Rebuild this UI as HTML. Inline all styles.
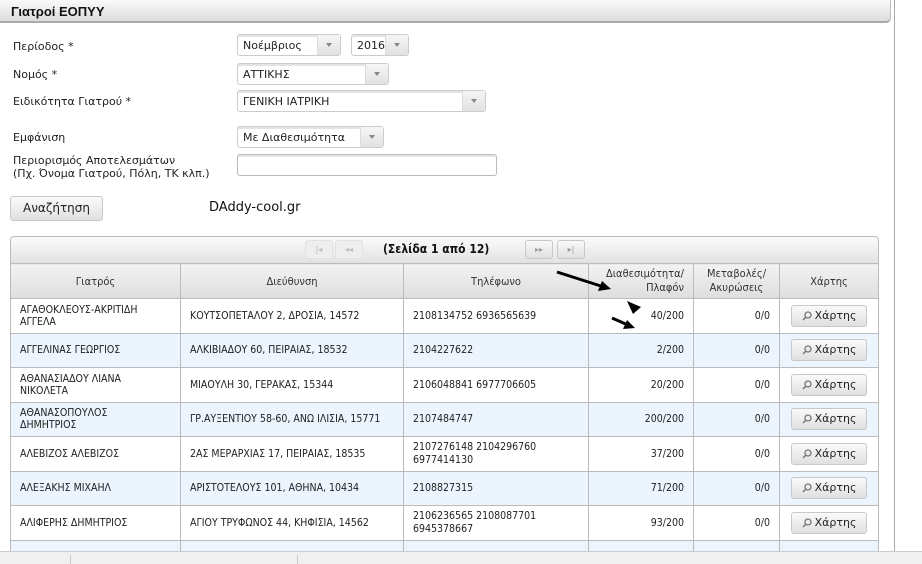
<!DOCTYPE html>
<html><head><meta charset="utf-8">
<style>
*{box-sizing:border-box;margin:0;padding:0}
html{width:922px;height:564px;overflow:hidden}
body{width:922px;height:564px;overflow:hidden;background:#fff;font-family:"DejaVu Sans","Liberation Sans",sans-serif;font-size:11px;color:#222;position:relative}
.abs{position:absolute}
.hdr{left:0;top:0;width:891px;height:23px;background:linear-gradient(#fafafa,#dcdcdc);border-bottom:2px solid #aaa;border-right:1px solid #bbb;border-bottom-right-radius:5px;font-family:"Liberation Sans",sans-serif;font-weight:bold;font-size:13px;padding:4px 0 0 11px;color:#111}
.vline{left:894px;top:0;width:1px;height:552px;background:#aaa}
.lbl{font-size:11px;color:#222}
.sel{height:22px;border:1px solid #ccc;border-radius:3px;background:#fff;font-size:11px;padding:4px 0 0 5px;color:#222;box-shadow:inset 0 2px 0 #e4e4e4}
.sel:after{content:"";position:absolute;right:0;top:0;width:22px;height:20px;background:linear-gradient(#f6f6f6,#e2e2e2);border-left:1px solid #ddd}
.sel i{position:absolute;right:8px;top:8px;width:0;height:0;border-left:3px solid transparent;border-right:3px solid transparent;border-top:4px solid #888;z-index:2}
.btn{border:1px solid #c8c8c8;border-radius:3px;background:linear-gradient(#fafafa,#e0e0e0);text-align:center}
.tw{position:absolute;left:10px;top:263px;width:870px;height:288px;overflow:hidden}
table{border-collapse:collapse;font-size:10.5px;font-family:"DejaVu Sans Condensed","DejaVu Sans",sans-serif}
td,th{border:1px solid #bbb;padding:0 9px;vertical-align:middle}
th{background:linear-gradient(#f2f2f2,#dedede);font-weight:normal;height:35px;color:#333;font-size:11px}
td{height:34.5px}
tr.alt td{background:#ecf4fd}
.r{text-align:right}
.mb{display:inline-block;width:76px;height:22px;line-height:20px;font-size:11px;font-family:"DejaVu Sans",sans-serif}
.mb svg{vertical-align:-2px;margin-right:3px}
</style></head><body>
<div class="abs hdr">Γιατροί ΕΟΠΥΥ</div>
<div class="abs vline"></div>

<div class="abs lbl" style="left:13px;top:40px">Περίοδος *</div>
<div class="abs lbl" style="left:13px;top:68px">Νομός *</div>
<div class="abs lbl" style="left:13px;top:95px">Ειδικότητα Γιατρού *</div>
<div class="abs lbl" style="left:13px;top:131px">Εμφάνιση</div>
<div class="abs lbl" style="left:13px;top:154px;line-height:13px">Περιορισμός Αποτελεσμάτων<br>(Πχ. Όνομα Γιατρού, Πόλη, ΤΚ κλπ.)</div>

<div class="abs sel" style="left:237px;top:34px;width:104px">Νοέμβριος<i></i></div>
<div class="abs sel" style="left:351px;top:34px;width:58px">2016<i></i></div>
<div class="abs sel" style="left:237px;top:63px;width:152px">ΑΤΤΙΚΗΣ<i></i></div>
<div class="abs sel" style="left:237px;top:90px;width:249px">ΓΕΝΙΚΗ ΙΑΤΡΙΚΗ<i></i></div>
<div class="abs sel" style="left:237px;top:126px;width:147px">Με Διαθεσιμότητα<i></i></div>
<div class="abs" style="left:237px;top:154px;width:260px;height:22px;border:1px solid #bbb;border-radius:3px;box-shadow:inset 0 2px 0 #e4e4e4"></div>

<div class="abs btn" style="left:10px;top:196px;width:93px;height:25px;line-height:23px;font-size:12px">Αναζήτηση</div>
<div class="abs" style="left:209px;top:200px;font-size:13px;color:#111">DAddy-cool.gr</div>

<div class="abs" style="left:10px;top:236px;width:869px;height:28px;border:1px solid #bbb;border-radius:4px 4px 0 0;background:linear-gradient(#fbfbfb,#e2e2e2)"></div>
<div class="abs btn" style="left:305px;top:240px;width:28px;height:19px;border-color:#e2e2e2;color:#bbb;font-size:8px;line-height:18px;background:#eee">|◂</div>
<div class="abs btn" style="left:335px;top:240px;width:28px;height:19px;border-color:#e2e2e2;color:#bbb;font-size:8px;line-height:18px;background:#eee">◂◂</div>
<div class="abs" style="left:383px;top:242px;font-family:'DejaVu Sans Condensed','DejaVu Sans',sans-serif;font-weight:bold;font-size:12px;color:#111">(Σελίδα 1 από 12)</div>
<div class="abs btn" style="left:525px;top:240px;width:28px;height:19px;color:#999;font-size:8px;line-height:18px">▸▸</div>
<div class="abs btn" style="left:557px;top:240px;width:28px;height:19px;color:#999;font-size:8px;line-height:18px">▸|</div>

<div class="tw"><table>
<colgroup><col style="width:170px"><col style="width:223px"><col style="width:185px"><col style="width:105px"><col style="width:86px"><col style="width:99px"></colgroup>
<tr><th>Γιατρός</th><th>Διεύθυνση</th><th>Τηλέφωνο</th><th class="r" style="line-height:14px">Διαθεσιμότητα/<br>Πλαφόν</th><th style="line-height:14px">Μεταβολές/<br>Ακυρώσεις</th><th>Χάρτης</th></tr>
<tr><td>ΑΓΑΘΟΚΛΕΟΥΣ-ΑΚΡΙΤΙΔΗ<br>ΑΓΓΕΛΑ</td><td>ΚΟΥΤΣΟΠΕΤΑΛΟΥ 2, ΔΡΟΣΙΑ, 14572</td><td>2108134752 6936565639</td><td class="r">40/200</td><td class="r">0/0</td><td style="text-align:center"><span class="btn mb"><svg width="10" height="10"><circle cx="6" cy="4" r="3" fill="none" stroke="#777" stroke-width="1.3"/><line x1="4" y1="6" x2="1" y2="9" stroke="#777" stroke-width="1.5"/></svg>Χάρτης</span></td></tr>
<tr class="alt"><td>ΑΓΓΕΛΙΝΑΣ ΓΕΩΡΓΙΟΣ</td><td>ΑΛΚΙΒΙΑΔΟΥ 60, ΠΕΙΡΑΙΑΣ, 18532</td><td>2104227622</td><td class="r">2/200</td><td class="r">0/0</td><td style="text-align:center"><span class="btn mb"><svg width="10" height="10"><circle cx="6" cy="4" r="3" fill="none" stroke="#777" stroke-width="1.3"/><line x1="4" y1="6" x2="1" y2="9" stroke="#777" stroke-width="1.5"/></svg>Χάρτης</span></td></tr>
<tr><td>ΑΘΑΝΑΣΙΑΔΟΥ ΛΙΑΝΑ<br>ΝΙΚΟΛΕΤΑ</td><td>ΜΙΑΟΥΛΗ 30, ΓΕΡΑΚΑΣ, 15344</td><td>2106048841 6977706605</td><td class="r">20/200</td><td class="r">0/0</td><td style="text-align:center"><span class="btn mb"><svg width="10" height="10"><circle cx="6" cy="4" r="3" fill="none" stroke="#777" stroke-width="1.3"/><line x1="4" y1="6" x2="1" y2="9" stroke="#777" stroke-width="1.5"/></svg>Χάρτης</span></td></tr>
<tr class="alt"><td>ΑΘΑΝΑΣΟΠΟΥΛΟΣ<br>ΔΗΜΗΤΡΙΟΣ</td><td>ΓΡ.ΑΥΞΕΝΤΙΟΥ 58-60, ΑΝΩ ΙΛΙΣΙΑ, 15771</td><td>2107484747</td><td class="r">200/200</td><td class="r">0/0</td><td style="text-align:center"><span class="btn mb"><svg width="10" height="10"><circle cx="6" cy="4" r="3" fill="none" stroke="#777" stroke-width="1.3"/><line x1="4" y1="6" x2="1" y2="9" stroke="#777" stroke-width="1.5"/></svg>Χάρτης</span></td></tr>
<tr><td>ΑΛΕΒΙΖΟΣ ΑΛΕΒΙΖΟΣ</td><td>2ΑΣ ΜΕΡΑΡΧΙΑΣ 17, ΠΕΙΡΑΙΑΣ, 18535</td><td style="line-height:13px">2107276148 2104296760<br>6977414130</td><td class="r">37/200</td><td class="r">0/0</td><td style="text-align:center"><span class="btn mb"><svg width="10" height="10"><circle cx="6" cy="4" r="3" fill="none" stroke="#777" stroke-width="1.3"/><line x1="4" y1="6" x2="1" y2="9" stroke="#777" stroke-width="1.5"/></svg>Χάρτης</span></td></tr>
<tr class="alt"><td>ΑΛΕΞΑΚΗΣ ΜΙΧΑΗΛ</td><td>ΑΡΙΣΤΟΤΕΛΟΥΣ 101, ΑΘΗΝΑ, 10434</td><td>2108827315</td><td class="r">71/200</td><td class="r">0/0</td><td style="text-align:center"><span class="btn mb"><svg width="10" height="10"><circle cx="6" cy="4" r="3" fill="none" stroke="#777" stroke-width="1.3"/><line x1="4" y1="6" x2="1" y2="9" stroke="#777" stroke-width="1.5"/></svg>Χάρτης</span></td></tr>
<tr><td>ΑΛΙΦΕΡΗΣ ΔΗΜΗΤΡΙΟΣ</td><td>ΑΓΙΟΥ ΤΡΥΦΩΝΟΣ 44, ΚΗΦΙΣΙΑ, 14562</td><td style="line-height:13px">2106236565 2108087701<br>6945378667</td><td class="r">93/200</td><td class="r">0/0</td><td style="text-align:center"><span class="btn mb"><svg width="10" height="10"><circle cx="6" cy="4" r="3" fill="none" stroke="#777" stroke-width="1.3"/><line x1="4" y1="6" x2="1" y2="9" stroke="#777" stroke-width="1.5"/></svg>Χάρτης</span></td></tr>
<tr class="alt"><td>&nbsp;</td><td></td><td></td><td></td><td></td><td></td></tr>
</table></div>

<svg class="abs" style="left:0;top:0" width="922" height="564">
<line x1="557" y1="272" x2="604" y2="287" stroke="#000" stroke-width="3"/>
<polygon points="611,289 598,291 602,281" fill="#000"/>
<polygon points="627,301 641,307 633,314" fill="#000"/>
<line x1="612" y1="318" x2="628" y2="325" stroke="#000" stroke-width="3"/>
<polygon points="635,328 623,329 627,320" fill="#000"/>
</svg>

<div class="abs" style="left:0;top:551px;width:922px;height:13px;background:#f0f0f0;border-top:1px solid #ccc;z-index:5"></div>
<div class="abs" style="left:70px;top:555px;width:1px;height:9px;background:#ccc;z-index:6"></div>
<div class="abs" style="left:297px;top:555px;width:1px;height:9px;background:#ccc;z-index:6"></div>
</body></html>
